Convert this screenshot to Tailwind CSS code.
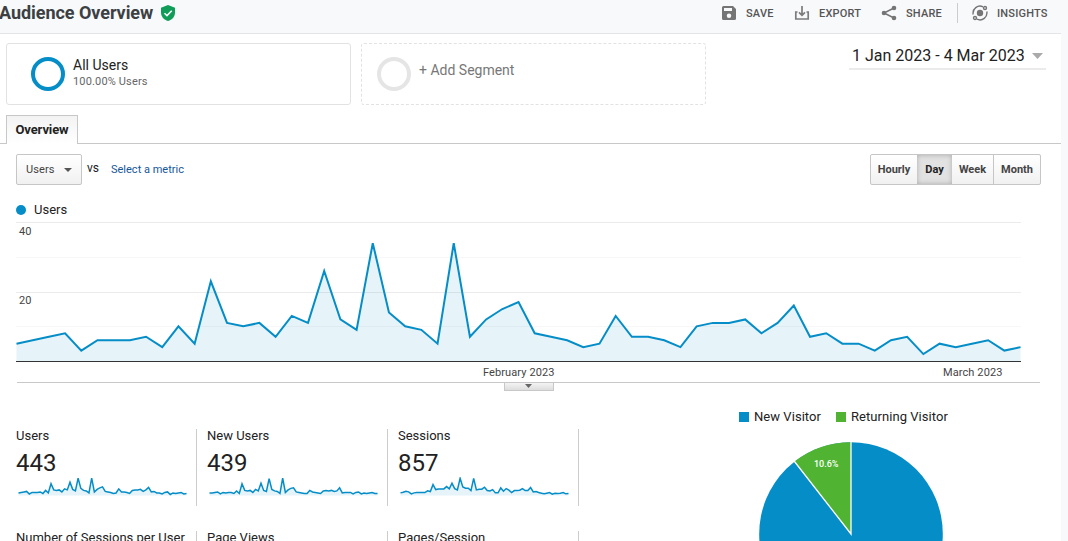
<!DOCTYPE html>
<html lang="en">
<head>
  <meta charset="UTF-8" />
  <meta name="viewport" content="width=device-width, initial-scale=1.0" />
  <title>Audience Overview</title>
  <script src="https://cdn.jsdelivr.net/npm/@tailwindcss/browser@4"></script>
</head>
<body class="bg-[#f8f9fb] font-['Roboto',sans-serif] text-[#222] w-[1068px] h-[541px] overflow-hidden">

  <!-- Header -->
  <header class="flex items-start justify-between h-[34px] w-[1061px] border-b border-[#e3e4e6] pr-[14px]">
    <div class="flex items-center h-[26px]">
      <h1 class="text-[18px] font-bold text-[#3c4043] leading-[26px] whitespace-nowrap w-[161px] -ml-px mr-px tracking-[-0.05px]">Audience Overview</h1>
      <svg class="w-[14px] h-4" viewBox="0 0 14 16">
        <path d="M7 0L0 2.8V7.5C0 11.500 3 15 7 16C11 15 14 11.500 14 7.500V2.800Z" fill="#0f9d58" />
        <path d="M3.500 8.200L6 10.600L10.700 5.700" fill="none" stroke="#fff" stroke-width="1.500" />
      </svg>
    </div>
    <nav class="flex items-center h-[26px] text-[11px] font-medium text-[#555] tracking-[0.2px] leading-none">
      <svg class="w-4 h-4 mr-[9px]" viewBox="0 0 16 16">
        <path fill="#757575" fill-rule="evenodd" d="M2.500 1H12L15 4V13.500Q15 15 13.500 15H2.500Q1 15 1 13.500V2.500Q1 1 2.500 1ZM3 3V6H11V3ZM8 8.500A2.200 2.200 0 0 0 8 13A2.200 2.200 0 0 0 8 8.500Z" />
      </svg>
      <span class="w-[48px]">SAVE</span>
      <svg class="w-4 h-4 mr-[9px]" viewBox="0 0 16 16" fill="none" stroke="#7c7c7c" stroke-width="1.700">
        <path d="M3.500 7H1.800V14H14.200V7H12.500M8 1V10M5 7.300L8 10.300L11 7.300" />
      </svg>
      <span class="w-[62px]">EXPORT</span>
      <svg class="w-4 h-4 mr-[9px]" viewBox="0 0 16 16">
        <path d="M13 3L3 8L13 13" fill="none" stroke="#757575" stroke-width="1.500" />
        <circle cx="13" cy="3" r="2.300" fill="#757575" /><circle cx="3" cy="8" r="2.300" fill="#757575" /><circle cx="13" cy="13" r="2.300" fill="#757575" />
      </svg>
      <span class="w-[51px]">SHARE</span>
      <span class="w-px h-5 bg-[#ccc] mr-[14px]"></span>
      <svg class="w-4 h-4 mr-[9px]" viewBox="0 0 16 16" fill="none" stroke="#757575" stroke-width="1.400">
        <circle cx="8" cy="8" r="3.200" fill="#757575" stroke="none" />
        <path d="M11 1.800A7 7 0 0 0 1.200 9.500M5 14.200A7 7 0 0 0 14.800 6.500" />
        <circle cx="13" cy="3" r="1.500" /><circle cx="3" cy="13" r="1.500" />
      </svg>
      <span class="w-[50px]">INSIGHTS</span>
    </nav>
  </header>

  <main class="bg-white w-[1061px] h-[507px]">
    <!-- Segments + date range -->
    <section class="flex items-start h-[81px] pt-[9px] pl-[6px]">
      <div class="flex w-[345px] h-[62px] border border-[#e2e2e2] rounded-[3px] pl-6 pt-[13px]">
        <div class="w-[34px] h-[34px] rounded-full border-4 border-[#058dc7] mr-2"></div>
        <div>
          <p class="text-[14px] leading-[17px]">All Users</p>
          <p class="text-[11px] leading-[15px] text-[#666] tracking-[0.15px]">100.00% Users</p>
        </div>
      </div>
      <div class="flex w-[345px] h-[62px] border border-dashed border-[#e2e2e2] rounded-[3px] ml-[10px] pl-[15px] pt-[13px]">
        <div class="w-[34px] h-[34px] rounded-full border-4 border-[#e5e5e5] mr-2"></div>
        <p class="text-[14px] leading-[27px] text-[#777]">+ Add Segment</p>
      </div>
      <div class="flex items-center justify-between w-[197px] h-[27px] border-b-2 border-[#ebebeb] ml-[143px] pl-[3px] pr-[3px] pt-px">
        <span class="text-[16px] leading-6 whitespace-nowrap">1 Jan 2023 - 4 Mar 2023</span>
        <svg class="w-[11px] h-[6px]" viewBox="0 0 11 6"><path d="M0 0H11L5.500 6Z" fill="#aaa" /></svg>
      </div>
    </section>

    <!-- Tabs -->
    <div class="flex h-[29px] border-b border-[#c8c8c8] pl-[6px]">
      <div class="w-[72px] h-[29px] border border-b-0 border-[#c8c8c8] bg-linear-to-b from-[#f3f3f3] to-white text-center text-[13px] font-bold leading-[28px] tracking-[-0.1px]">Overview</div>
    </div>

    <!-- Metric picker + period buttons -->
    <section class="flex items-start h-[54px] pt-[10px] pl-4 pr-5 text-[11px]">
      <div class="flex items-center w-[66px] h-[31px] border border-[#c6c6c6] rounded-[2px] bg-linear-to-b from-white to-[#f1f1f1] pl-[9px] text-[#444]">
        <span class="w-[38px] tracking-[0.1px] pt-px">Users</span>
        <svg class="w-2 h-1" viewBox="0 0 8 4"><path d="M0 0H8L4 4Z" fill="#555" /></svg>
      </div>
      <span class="text-[12px] leading-[28px] ml-[5px] w-[24px]">vs</span>
      <span class="text-[#15579b] leading-[31px]">Select a metric</span>
      <div class="flex ml-auto h-[31px] border border-[#c6c6c6] rounded-[2px] bg-linear-to-b from-white to-[#f1f1f1] font-bold text-[#444] text-center leading-[29px]">
        <span class="w-[46px]">Hourly</span>
        <span class="w-[35px] bg-[#e2e2e2] text-[#222] shadow-[inset_0_0_5px_#aaa]">Day</span>
        <span class="w-[41px]">Week</span>
        <span class="w-[47px] border-l border-[#c6c6c6]">Month</span>
      </div>
    </section>

    <!-- Users over time -->
    <section class="h-[192px] pl-4">
      <div class="flex items-center h-[24px]">
        <span class="w-[10px] h-[10px] rounded-full bg-[#058dc7] mr-2 -mt-px"></span>
        <span class="text-[13px] leading-6">Users</span>
      </div>
      <svg class="w-[1006px] h-[142px]" viewBox="0 0 1006 142">
        <g shape-rendering="crispEdges">
          <path d="M0 .5H1005M0 70.500H1005" stroke="#ebebeb" />
          <path d="M0 35.500H1005M0 104.500H1005" stroke="#f7f7f7" />
        </g>
        <g id="chart"></g>
        <path d="M0 139.500H1005" stroke="#333" shape-rendering="crispEdges" />
        <g class="text-[11px]" fill="#444"><text x="3" y="13">40</text><text x="3" y="82">20</text></g>
      </svg>
      <div class="flex -mt-px text-[11px] leading-5 h-[19px] text-[#444] tracking-[0.1px]">
        <span class="ml-[467px] w-[460px]">February 2023</span>
        <span>March 2023</span>
      </div>
      <div class="flex justify-center w-[1023px] h-[9px] border-t border-[#c8c8c8] ml-px">
        <div class="flex items-start justify-center w-[50px] h-2 pt-px border border-t-0 border-[#c8c8c8] bg-linear-to-b from-[#f3f3f3] to-[#ddd]">
          <svg class="w-[7px] h-1" viewBox="0 0 7 4"><path d="M0 0H7L3.500 4Z" fill="#666" /></svg>
        </div>
      </div>
    </section>

    <!-- Scorecards + visitor pie -->
    <section class="flex h-[151px]">
      <div class="grid grid-cols-[repeat(3,191px)] grid-rows-[77px_60px] gap-y-[25px] content-start pl-[6px] pt-[39px] w-[735px] h-[151px] overflow-hidden text-[13px]">
        <div class="border-r border-[#ccc] pl-[10px]">
          <p class="leading-[14px]">Users</p>
          <p class="text-[24px] leading-[28px] mt-[6px]">443</p>
          <svg id="spark-users" class="w-[174px] h-5" viewBox="0 0 174 20"></svg>
        </div>
        <div class="border-r border-[#ccc] pl-[10px]">
          <p class="leading-[14px]">New Users</p>
          <p class="text-[24px] leading-[28px] mt-[6px]">439</p>
          <svg id="spark-new" class="w-[174px] h-5" viewBox="0 0 174 20"></svg>
        </div>
        <div class="border-r border-[#ccc] pl-[10px]">
          <p class="leading-[14px]">Sessions</p>
          <p class="text-[24px] leading-[28px] mt-[6px]">857</p>
          <svg id="spark-sessions" class="w-[174px] h-5" viewBox="0 0 174 20"></svg>
        </div>
        <p class="border-r border-[#ccc] pl-[10px] leading-[14px] whitespace-nowrap">Number of Sessions per User</p>
        <p class="border-r border-[#ccc] pl-[10px] leading-[14px]">Page Views</p>
        <p class="border-r border-[#ccc] pl-[10px] leading-[14px]">Pages/Session</p>
      </div>
      <div class="w-[326px] pt-[17px]">
        <div class="flex items-center h-5 pl-1 text-[13px] text-[#222] tracking-[0.05px]">
          <span class="w-[10px] h-[10px] bg-[#058dc7] mr-[5px]"></span><span class="w-[82px]">New Visitor</span>
          <span class="w-[10px] h-[10px] bg-[#50b432] mr-[5px]"></span><span>Returning Visitor</span>
        </div>
        <svg class="w-[326px] h-[113px] mt-px" viewBox="0 0 326 113">
          <circle cx="116" cy="106" r="91.800" fill="#058dc7" />
          <path d="M116 106V14.200A91.800 91.800 0 0 0 59.400 33.600Z" fill="#50b432" />
          <path d="M116 13V106L59.100 33" fill="none" stroke="#fff" stroke-width="1.300" />
          <text x="79" y="39" fill="#fff" class="text-[9px] font-medium">10.6%</text>
        </svg>
      </div>
    </section>
  </main>

<script>
  const users = [5,6,7,8,3,6,6,6,7,4,10,5,23,11,10,11,7,13,11,26,12,9,34,14,10,9,5,34,7,12,15,17,8,7,6,4,5,13,7,7,6,4,10,11,11,12,8,11,16,7,8,5,5,3,6,7,2,5,4,5,6,3,4];
  const newUsers = [5,5,6,7,3,6,5,6,6,4,9,4,23,10,9,10,6,12,9,24,10,8,33,12,9,8,4,34,6,11,14,15,7,6,5,4,4,10,7,6,5,4,9,10,9,10,8,9,15,5,6,6,6,3,6,7,3,5,4,5,6,4,4];
  const sessions = [8,10,13,11,5,8,9,9,9,9,14,12,33,18,20,20,20,27,20,37,21,17,52,26,22,22,15,52,17,19,19,25,15,14,18,8,8,23,13,21,16,9,15,15,16,21,15,15,24,11,12,9,7,5,7,9,4,7,6,7,9,5,6];

  function drawLine(el, data, x0, step, base, unit, width) {
    const pts = data.map((v, i) => `${(x0 + i * step).toFixed(2)},${(base - v * unit).toFixed(2)}`).join(" ");
    const last = x0 + (data.length - 1) * step;
    el.innerHTML = `
      <polygon points="${x0},${base} ${pts} ${last},${base}" fill="#058dc7" fill-opacity="0.1" />
      <polyline points="${pts}" fill="none" stroke="#058dc7" stroke-width="${width}" />
    `;
  }

  drawLine(document.getElementById("chart"), users, 0.5, 16.194, 139, 3.465, 2);
  drawLine(document.getElementById("spark-users"), users, 2.5, 2.71, 18.5, 0.51, 1.5);
  drawLine(document.getElementById("spark-new"), newUsers, 2.5, 2.71, 18.5, 0.51, 1.5);
  drawLine(document.getElementById("spark-sessions"), sessions, 2.5, 2.71, 18.5, 0.33, 1.5);
</script>
</body>
</html>
